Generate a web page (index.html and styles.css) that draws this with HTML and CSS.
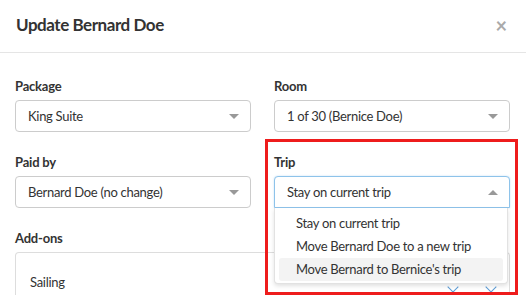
FILE: index.html
```html
<!DOCTYPE html>
<html lang="en">
<head>
    <meta charset="UTF-8">
    <title>Update Bernard Doe</title>
    <link rel="stylesheet" href="styles.css">
</head>
<body>
    <div class="modal">
        <div class="modal-header">
            <h2>Update Bernard Doe</h2>
            <span class="close">&times;</span>
        </div>
        <div class="modal-body">
            <div class="form-grid">
                <div class="form-group">
                    <label>Package</label>
                    <div class="select"><span>King Suite</span><i class="caret"></i></div>
                </div>
                <div class="form-group">
                    <label>Room</label>
                    <div class="select"><span>1 of 30 (Bernice Doe)</span><i class="caret"></i></div>
                </div>
                <div class="form-group">
                    <label>Paid by</label>
                    <div class="select"><span>Bernard Doe (no change)</span><i class="caret"></i></div>
                </div>
                <div class="form-group trip-group">
                    <label>Trip</label>
                    <div class="select open"><span>Stay on current trip</span><i class="caret up"></i></div>
                    <ul class="menu">
                        <li>Stay on current trip</li>
                        <li>Move Bernard Doe to a new trip</li>
                        <li class="active">Move Bernard to Bernice's trip</li>
                    </ul>
                    <div class="highlight"></div>
                </div>
            </div>
            <div class="form-group addons">
                <label>Add-ons</label>
                <div class="addon-box">
                    <div class="addon-row">
                        <span>Sailing</span>
                        <span class="spinner"><i></i><i></i></span>
                    </div>
                </div>
            </div>
        </div>
    </div>
</body>
</html>
```

FILE: styles.css
```css
* {
    margin: 0;
    padding: 0;
    box-sizing: border-box;
}

body {
    font-family: Lato, "Open Sans", sans-serif;
    background: #fff;
    color: #333;
    width: 526px;
    height: 295px;
    overflow: hidden;
}

.modal-header {
    height: 53px;
    border-bottom: 1px solid #e5e5e5;
    display: flex;
    align-items: center;
    justify-content: space-between;
    padding: 0 16px 4px 16px;
}

.modal-header h2 {
    font-size: 17px;
    font-weight: 700;
    letter-spacing: -0.45px;
    color: #333;
}

.close {
    font-size: 20px;
    font-weight: 700;
    color: #aaa;
    margin-right: 3px;
    margin-top: 2px;
}

.modal-body {
    padding: 24px 16px 0 15px;
}

.form-grid {
    display: grid;
    grid-template-columns: 236px 236px;
    column-gap: 23px;
    row-gap: 21px;
}

.form-group label {
    display: block;
    font-size: 13px;
    font-weight: 700;
    letter-spacing: -0.2px;
    line-height: 18px;
    margin-bottom: 5px;
}

.select {
    height: 32px;
    border: 1px solid #ccc;
    border-radius: 4px;
    display: flex;
    align-items: center;
    justify-content: space-between;
    padding: 0 11px 0 12px;
    font-size: 13px;
    letter-spacing: -0.3px;
    color: #333;
    background: #fff;
}

.select.open {
    border-color: #8ec3ea;
    box-shadow: 0 0 2px rgba(102, 175, 233, 0.4);
    border-radius: 4px 4px 0 0;
}

.caret {
    width: 0;
    height: 0;
    border-left: 5px solid transparent;
    border-right: 5px solid transparent;
    border-top: 5px solid #999;
}

.caret.up {
    border-top: none;
    border-bottom: 5px solid #999;
}

.trip-group {
    position: relative;
}

.menu {
    position: absolute;
    top: 55px;
    left: 0;
    width: 234px;
    list-style: none;
    background: #fff;
    border: 1px solid #e2e2e2;
    border-top: none;
    border-radius: 0 0 4px 4px;
    box-shadow: 0 2px 4px rgba(0, 0, 0, 0.12);
    padding: 4px 4px 2px 4px;
    z-index: 3;
}

.menu li {
    font-size: 13px;
    letter-spacing: -0.3px;
    line-height: 23px;
    padding-left: 17px;
    border-radius: 3px;
    color: #333;
}

.menu li.active {
    background: #f3f3f3;
}

.highlight {
    position: absolute;
    top: -14px;
    left: -9px;
    width: 253px;
    height: 156px;
    border: 3px solid #ee1c1c;
    z-index: 4;
}

.addons {
    margin-top: 21px;
}

.addon-box {
    border: 1px solid #ddd;
    border-bottom: none;
    border-radius: 4px 4px 0 0;
    height: 43px;
    padding: 21px 14px 0 14px;
}

.addon-row {
    display: flex;
    justify-content: space-between;
    font-size: 13px;
    letter-spacing: -0.3px;
}

.spinner {
    display: flex;
    gap: 30px;
    margin-top: 9px;
}

.spinner i {
    width: 8px;
    height: 8px;
    border-left: 1px solid #5b9bd5;
    border-bottom: 1px solid #5b9bd5;
    transform: rotate(-45deg);
}
```
